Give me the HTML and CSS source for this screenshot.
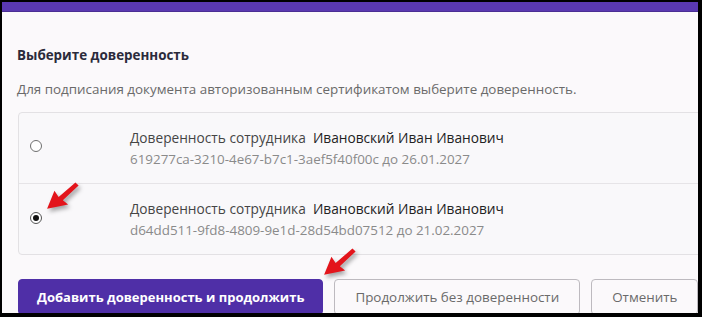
FILE: index.html
```html
<!DOCTYPE html>
<html lang="ru">
<head>
    <meta charset="UTF-8">
    <title>Выберите доверенность</title>
    <link rel="stylesheet" href="styles.css">
</head>
<body>
    <div class="frame">
        <div class="topbar"></div>

        <div class="dialog">
            <h2 class="title">Выберите доверенность</h2>
            <p class="desc">Для подписания документа авторизованным сертификатом выберите доверенность.</p>

            <div class="list">
                <label class="item">
                    <span class="radio-col"><span class="radio"></span></span>
                    <span class="info">
                        <span class="line">Доверенность сотрудника&nbsp; <span class="name">Ивановский Иван Иванович</span></span>
                        <span class="meta">619277ca-3210-4e67-b7c1-3aef5f40f00c до 26.01.2027</span>
                    </span>
                </label>
                <label class="item">
                    <span class="radio-col"><span class="radio checked"></span></span>
                    <span class="info">
                        <span class="line">Доверенность сотрудника&nbsp; <span class="name">Ивановский Иван Иванович</span></span>
                        <span class="meta">d64dd511-9fd8-4809-9e1d-28d54bd07512 до 21.02.2027</span>
                    </span>
                </label>
            </div>

            <div class="actions">
                <button class="btn primary">Добавить доверенность и продолжить</button>
                <button class="btn">Продолжить без доверенности</button>
                <button class="btn">Отменить</button>
            </div>
        </div>

        <!-- annotation arrows -->
        <svg class="arrow arrow-radio" width="42" height="36" viewBox="0 0 40 34">
            <polygon points="2,30 9,13 13,19 29,5 32,8 17,22 22,26" fill="#e3141b"/>
        </svg>
        <svg class="arrow arrow-btn" width="42" height="36" viewBox="0 0 40 34">
            <polygon points="2,30 9,13 13,19 29,5 32,8 17,22 22,26" fill="#e3141b"/>
        </svg>
    </div>
</body>
</html>
```

FILE: styles.css
```css
html, body {
    margin: 0;
    padding: 0;
    background: #000;
}
body {
    padding: 2px 0 0 2px;
    font-family: "Open Sans", "Noto Sans", sans-serif;
}
.frame {
    position: relative;
    width: 696px;
    height: 311px;
    overflow: hidden;
    background: #fbf9fb;
}
.topbar {
    height: 9px;
    background: #5a39b1;
    border-bottom: 1px solid #4a2e94;
}
.dialog {
    padding: 33px 0 0 15px;
}
.title {
    margin: 0;
    font-size: 13.4px;
    line-height: 20px;
    font-weight: 700;
    color: #2b2b3b;
}
.desc {
    margin: 14px 0 0;
    font-size: 13.4px;
    line-height: 20px;
    color: #6a6a6a;
}
.list {
    margin: 13px -20px 0 1px;
    border: 1px solid #e3e1e4;
    border-radius: 4px;
    background: #f9f8fa;
}
.item {
    display: flex;
    height: 70px;
    border-bottom: 1px solid #e6e4e7;
}
.item:last-child {
    border-bottom: none;
}
.radio-col {
    box-sizing: border-box;
    width: 111px;
    display: flex;
    align-items: center;
    padding-left: 11px;
}
.radio {
    width: 10px;
    height: 10px;
    border: 1px solid #6f6f6f;
    border-radius: 50%;
    background: #fff;
    position: relative;
    margin-top: -4px;
}
.radio.checked {
    border-color: #555;
    margin-top: -2px;
}
.radio.checked::after {
    content: "";
    position: absolute;
    left: 2px;
    top: 2px;
    width: 6px;
    height: 6px;
    border-radius: 50%;
    background: #111;
}
.info {
    display: flex;
    flex-direction: column;
    padding-top: 15px;
}
.line {
    font-size: 13.7px;
    line-height: 20px;
    color: #454545;
}
.name {
    color: #222;
}
.meta {
    margin-top: 1px;
    font-size: 13.4px;
    line-height: 20px;
    color: #8a8a8a;
}
.actions {
    display: flex;
    gap: 11px;
    margin: 24px 0 0 1px;
}
.btn {
    height: 36px;
    padding: 0 20px;
    border: 1px solid #bdbabf;
    border-radius: 4px;
    background: #fbf9fb;
    color: #6a6a6a;
    font-family: inherit;
    font-size: 13.4px;
    white-space: nowrap;
}
.btn.primary {
    padding: 0 18px;
    background: #4f2fa7;
    border-color: #4f2fa7;
    color: #fff;
    font-size: 13px;
    font-weight: 700;
}
.arrow {
    position: absolute;
    filter: drop-shadow(2px 3px 2px rgba(0, 0, 0, 0.35));
}
.arrow-radio {
    left: 43px;
    top: 175px;
}
.arrow-btn {
    left: 320px;
    top: 241px;
}
```
